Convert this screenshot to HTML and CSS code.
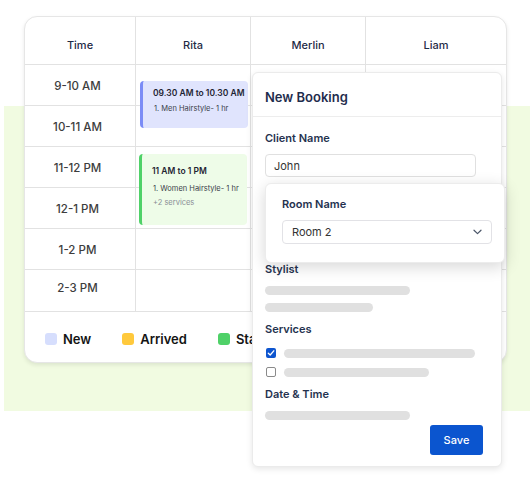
FILE: index.html
```html
<!DOCTYPE html>
<html>
<head>
<meta charset="utf-8">
<link rel="stylesheet" href="styles.css">
</head>
<body>
<div class="stage">
  <div class="backdrop"></div>
  <div class="card">
    <div class="table">
      <div class="col col-time">
        <div class="head">Time</div>
        <div class="cell time">9-10 AM</div>
        <div class="cell time">10-11 AM</div>
        <div class="cell time">11-12 PM</div>
        <div class="cell time">12-1 PM</div>
        <div class="cell time">1-2 PM</div>
        <div class="cell time last">2-3 PM</div>
      </div>
      <div class="col col-staff rita">
        <div class="head">Rita</div>
        <div class="cell"></div><div class="cell"></div><div class="cell"></div>
        <div class="cell"></div><div class="cell"></div><div class="cell last"></div>
        <div class="booking b-new">
          <div class="b-time">09.30 AM to 10.30 AM</div>
          <div class="b-line">1. Men Hairstyle- 1 hr</div>
        </div>
        <div class="booking b-started">
          <div class="b-time">11 AM to 1 PM</div>
          <div class="b-line">1. Women Hairstyle- 1 hr</div>
          <div class="b-more">+2 services</div>
        </div>
      </div>
      <div class="col col-staff">
        <div class="head">Merlin</div>
        <div class="cell"></div><div class="cell"></div><div class="cell"></div>
        <div class="cell"></div><div class="cell"></div><div class="cell last"></div>
      </div>
      <div class="col col-wide">
        <div class="head">Liam</div>
        <div class="cell"></div><div class="cell"></div><div class="cell"></div>
        <div class="cell"></div><div class="cell"></div><div class="cell last"></div>
      </div>
    </div>
    <div class="legend">
      <div class="leg"><span class="sq sq-new"></span>New</div>
      <div class="leg"><span class="sq sq-arr"></span>Arrived</div>
      <div class="leg"><span class="sq sq-sta"></span>Started</div>
    </div>
  </div>

  <div class="panel">
    <div class="panel-head">New Booking</div>
    <div class="panel-body">
      <div class="label">Client Name</div>
      <div class="input">John</div>
      <div class="label stylist">Stylist</div>
      <div class="bar w145 mt10"></div>
      <div class="bar w108 mt8"></div>
      <div class="label mt10">Services</div>
      <div class="check-row r1">
        <span class="cb cb-on"><svg width="8" height="8" viewBox="0 0 8 8"><path d="M1.3 4.2 L3.2 6 L6.8 1.8" fill="none" stroke="#fff" stroke-width="1.3" stroke-linecap="round" stroke-linejoin="round"/></svg></span>
        <span class="bar w191"></span>
      </div>
      <div class="check-row r2">
        <span class="cb cb-off"></span>
        <span class="bar w145"></span>
      </div>
      <div class="label mt10">Date &amp; Time</div>
      <div class="bar w145 mt10"></div>
      <div class="actions"><button class="save">Save</button></div>
    </div>
    <div class="room">
      <div class="label">Room Name</div>
      <div class="select">
        <span>Room 2</span>
        <svg width="9" height="6" viewBox="0 0 9 6"><path d="M1 1.2 L4.5 4.6 L8 1.2" fill="none" stroke="#4a5568" stroke-width="1.2" stroke-linecap="round" stroke-linejoin="round"/></svg>
      </div>
    </div>
  </div>
</div>
</body>
</html>
```
FILE: styles.css
```css
* { box-sizing: border-box; }
html, body { margin: 0; padding: 0; background: #fff; }
body { font-family: Inter, "Noto Sans", sans-serif; }

.stage {
  position: relative;
  width: 530px;
  height: 482px;
  overflow: hidden;
  padding: 16px 0 0 24px;
}
.backdrop {
  position: absolute;
  left: 4px;
  top: 106px;
  width: 540px;
  height: 305px;
  background: #f1fbe1;
  z-index: 0;
}
.card {
  position: relative;
  z-index: 1;
  width: 483px;
  background: #fff;
  border: 1px solid #e6e6e6;
  border-radius: 13px;
  box-shadow: 0 2px 4px rgba(0,0,0,0.09);
  overflow: hidden;
}
.table { display: flex; }
.col { display: flex; flex-direction: column; border-right: 1px solid #e2e2e2; }
.col-time { width: 111px; }
.col-staff { width: 115px; }
.col-wide { flex: 1; border-right: none; }
.rita { position: relative; }
.head {
  height: 48px;
  display: flex;
  align-items: center;
  justify-content: center;
  padding-top: 8px;
  font-size: 11px;
  font-weight: 500;
  color: #1f2b46;
  border-bottom: 1px solid #e2e2e2;
}
.cell {
  height: 41px;
  border-bottom: 1px solid #e2e2e2;
}
.cell.last { height: 42px; }
.time {
  display: flex;
  align-items: center;
  justify-content: center;
  padding: 2px 5px 0 0;
  font-size: 11.5px;
  font-weight: 500;
  color: #3d3d3d;
}
.time.last { padding: 0 5px 5px 0; }
.booking {
  position: absolute;
  left: 4px;
  width: 108px;
  border-radius: 4px;
  padding: 6px 0 0 10px;
}
.b-new {
  top: 64px;
  height: 47px;
  background: #e0e4fd;
  border-left: 3px solid #7b8cf6;
}
.b-started {
  top: 137px;
  height: 71px;
  left: 3px;
  background: #eefce8;
  border-left: 3px solid #4fd168;
  padding-top: 11px;
}
.b-time { font-size: 8.5px; font-weight: 600; color: #1f2433; line-height: 12px; }
.b-line { font-size: 7.5px; color: #3b3f4a; margin-top: 5px; line-height: 10px; padding-left: 1px; }
.b-started .b-line { margin-top: 7px; }
.b-more { font-size: 7.5px; color: #8a8e96; margin-top: 4px; line-height: 10px; padding-left: 1px; }

.legend {
  width: 227px;
  overflow: hidden;
  height: 50px;
  display: flex;
  align-items: center;
  gap: 31px;
  padding: 4px 0 0 20px;
  white-space: nowrap;
}
.leg {
  display: flex;
  align-items: center;
  gap: 6px;
  font-size: 13px;
  font-weight: 600;
  color: #141414;
  flex: none;
}
.sq { width: 12px; height: 12px; border-radius: 3px; display: inline-block; }
.sq-new { background: #d6defd; }
.sq-arr { background: #ffc93c; }
.sq-sta { background: #4fd168; }

.panel {
  position: absolute;
  left: 252px;
  top: 72px;
  width: 250px;
  height: 395px;
  background: #fff;
  border: 1px solid #ebebeb;
  border-radius: 6px;
  box-shadow: 0 2px 6px rgba(0,0,0,0.1);
  z-index: 2;
}
.panel-head {
  height: 44px;
  display: flex;
  align-items: center;
  padding-left: 12px;
  padding-top: 5px;
  font-size: 13px;
  font-weight: 600;
  color: #1f2d4d;
  border-bottom: 1px solid #ededed;
}
.panel-body {
  padding: 14px 12px 0 12px;
  display: flex;
  flex-direction: column;
  align-items: flex-start;
}
.label {
  font-size: 11px;
  line-height: 14px;
  font-weight: 600;
  color: #25324f;
}
.input {
  margin-top: 9px;
  width: 211px;
  height: 23px;
  border: 1px solid #e0e0e0;
  border-radius: 4px;
  padding-left: 8px;
  display: flex;
  align-items: center;
  font-size: 11px;
  color: #333;
}
.stylist { margin-top: 85px; }
.mt10 { margin-top: 10px; }
.mt8 { margin-top: 8px; }
.bar {
  height: 9px;
  border-radius: 5px;
  background: #e0e0e0;
  display: block;
}
.w145 { width: 145px; }
.w108 { width: 108px; }
.w191 { width: 191px; }
.check-row {
  display: flex;
  align-items: center;
  gap: 8px;
  padding-left: 1px;
}
.r1 { margin-top: 12px; }
.r2 { margin-top: 9px; }
.cb {
  width: 10px;
  height: 10px;
  border-radius: 2px;
  display: flex;
  align-items: center;
  justify-content: center;
}
.cb-on { background: #0e55cf; }
.cb-off { border: 1.5px solid #8a8a8a; }
.actions {
  align-self: stretch;
  display: flex;
  justify-content: flex-end;
  padding-right: 6px;
  margin-top: 5px;
}
.save {
  width: 53px;
  height: 30px;
  border: none;
  border-radius: 3px;
  background: #0b55cf;
  color: #fff;
  font-family: inherit;
  font-size: 11px;
  font-weight: 500;
}
.room {
  position: absolute;
  left: 12px;
  top: 110px;
  width: 240px;
  height: 80px;
  background: #fff;
  border: 1px solid #ececec;
  border-radius: 6px;
  box-shadow: 0 4px 16px rgba(0,0,0,0.16);
  padding: 13px 0 0 16px;
}
.select {
  margin-top: 9px;
  width: 210px;
  height: 24px;
  border: 1px solid #e2e2e6;
  border-radius: 4px;
  display: flex;
  align-items: center;
  justify-content: space-between;
  padding: 0 9px 0 9px;
  font-size: 11px;
  color: #333;
}
```
